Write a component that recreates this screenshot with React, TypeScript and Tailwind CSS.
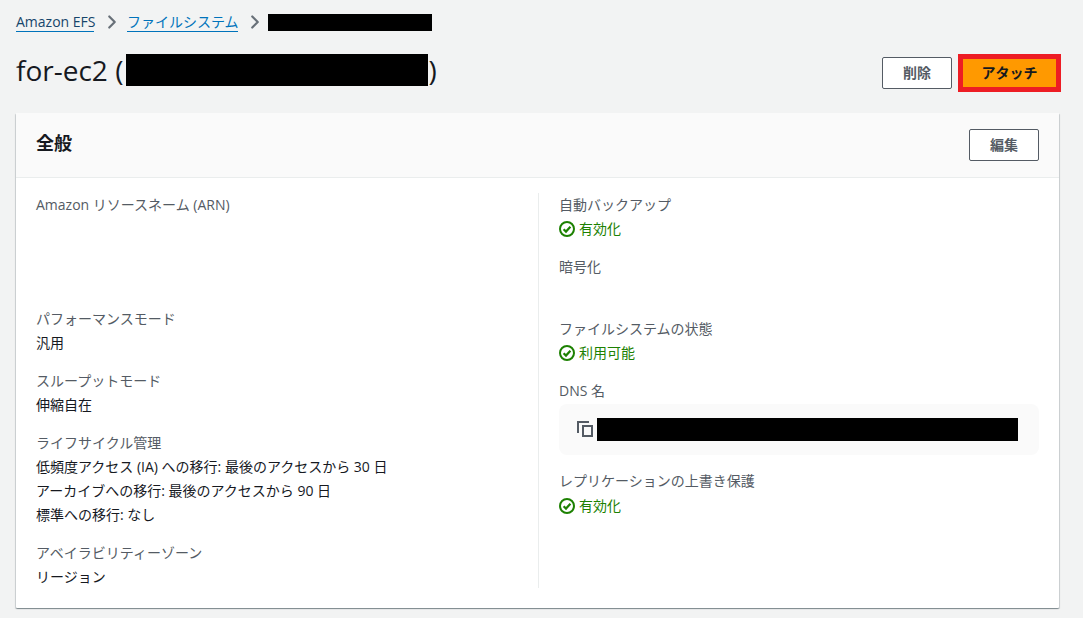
import { ChevronRight } from "lucide-react";

const font = "font-['Open_Sans','Noto_Sans_CJK_JP',sans-serif]";

function Label({ children }: { children: React.ReactNode }) {
  return <div className="h-6 text-[14px] leading-6 text-[#545b64]">{children}</div>;
}

function Value({ children }: { children: React.ReactNode }) {
  return <div className="h-6 text-[14px] leading-6 text-[#16191f]">{children}</div>;
}

function StatusOk({ children }: { children: React.ReactNode }) {
  return (
    <div className="flex h-6 items-center gap-1 text-[14px] leading-6 text-[#1d8102]">
      <svg width="16" height="16" viewBox="0 0 16 16" fill="none" stroke="currentColor" strokeWidth="2">
        <circle cx="8" cy="8" r="7" />
        <path d="M4.6 8.2 7 10.6l4.4-4.8" strokeWidth="2.2" />
      </svg>
      {children}
    </div>
  );
}

function OutlineButton({ children }: { children: React.ReactNode }) {
  return (
    <button className="flex h-8 w-[70px] items-center justify-center rounded-[2px] border border-[#545b64] bg-white pb-[2px] text-[14px] font-bold text-[#545b64]">
      {children}
    </button>
  );
}

export default function App() {
  return (
    <div className={`${font} h-[618px] w-[1083px] overflow-hidden bg-[#f2f3f3] pl-4 pr-6 pt-3`}>
      {/* Breadcrumb */}
      <nav className="flex h-5 items-center text-[14px] leading-5">
        <a className="w-[78px] whitespace-nowrap border-b border-[#0073bb] leading-[19px] text-[#16456b]">Amazon EFS</a>
        <ChevronRight size={22} strokeWidth={2.4} className="ml-[7px] mr-[4px] text-[#687078]" />
        <a className="w-[111px] whitespace-nowrap border-b border-[#0073bb] leading-[19px] text-[#0073bb]">ファイルシステム</a>
        <ChevronRight size={22} strokeWidth={2.4} className="ml-[6px] mr-[2px] text-[#687078]" />
        <span className="h-[17px] w-[164px] bg-black" />
      </nav>

      {/* Title row */}
      <div className="mt-[22px] flex h-[32px] items-center justify-between">
        <h1 className="flex items-center text-[28px] font-normal leading-8 text-[#16191f]">
          <span className="whitespace-pre">for-ec2 (</span>
          <span className="ml-[3px] h-[32px] w-[302px] bg-black" />
          <span>)</span>
        </h1>
        <div className="-mr-[2px] mt-[6px] flex items-center gap-[6px]">
          <OutlineButton>削除</OutlineButton>
          <button className="flex h-[38px] w-[103px] items-center justify-center border-[5px] border-[#ed1c24] bg-[#ff9900] pb-[2px] text-[14px] font-bold text-[#16191f]">
            アタッチ
          </button>
        </div>
      </div>

      {/* Card */}
      <section className="mt-[27px] h-[495px] w-[1043px] rounded-[1px] bg-white shadow-[0_1px_1px_0_rgba(0,28,36,0.3),1px_1px_1px_0_rgba(0,28,36,0.15),-1px_1px_1px_0_rgba(0,28,36,0.15)]">
        <header className="flex h-[65px] items-center justify-between border-b border-[#eaeded] bg-[#fafafa] pl-5 pr-5">
          <h2 className="pb-[5px] text-[18px] font-bold leading-6 text-[#16191f]">全般</h2>
          <OutlineButton>編集</OutlineButton>
        </header>

        <div className="flex pt-[15px]">
          <div className="flex h-[395px] w-[523px] flex-col border-r border-[#eaeded] pl-5">
            <Label>Amazon リソースネーム (ARN)</Label>
            <div className="mt-[90px]">
              <Label>パフォーマンスモード</Label>
              <Value>汎用</Value>
            </div>
            <div className="mt-[14px]">
              <Label>スループットモード</Label>
              <Value>伸縮自在</Value>
            </div>
            <div className="mt-[14px]">
              <Label>ライフサイクル管理</Label>
              <Value>低頻度アクセス (IA) への移行: 最後のアクセスから 30 日</Value>
              <Value>アーカイブへの移行: 最後のアクセスから 90 日</Value>
              <Value>標準への移行: なし</Value>
            </div>
            <div className="mt-[14px]">
              <Label>アベイラビリティーゾーン</Label>
              <Value>リージョン</Value>
            </div>
          </div>

          <div className="flex-1 pl-5 pr-5">
            <Label>自動バックアップ</Label>
            <StatusOk>有効化</StatusOk>
            <div className="mt-[14px]">
              <Label>暗号化</Label>
            </div>
            <div className="mt-[38px]">
              <Label>ファイルシステムの状態</Label>
              <StatusOk>利用可能</StatusOk>
            </div>
            <div className="mt-[14px]">
              <Label>DNS 名</Label>
              <div className="mt-[1px] flex h-[51px] items-center rounded-lg bg-[#fafafa] pl-4">
                <svg width="20" height="20" viewBox="0 0 20 20" fill="none" stroke="#545b64" strokeWidth="2" className="mr-[2px] shrink-0">
                  <path d="M3 13V2h11" />
                  <rect x="8" y="6" width="9" height="10" />
                </svg>
                <span className="h-[23px] w-[421px] bg-black" />
              </div>
            </div>
            <div className="mt-[14px]">
              <Label>レプリケーションの上書き保護</Label>
              <div className="pt-[1px]">
                <StatusOk>有効化</StatusOk>
              </div>
            </div>
          </div>
        </div>
      </section>
    </div>
  );
}
